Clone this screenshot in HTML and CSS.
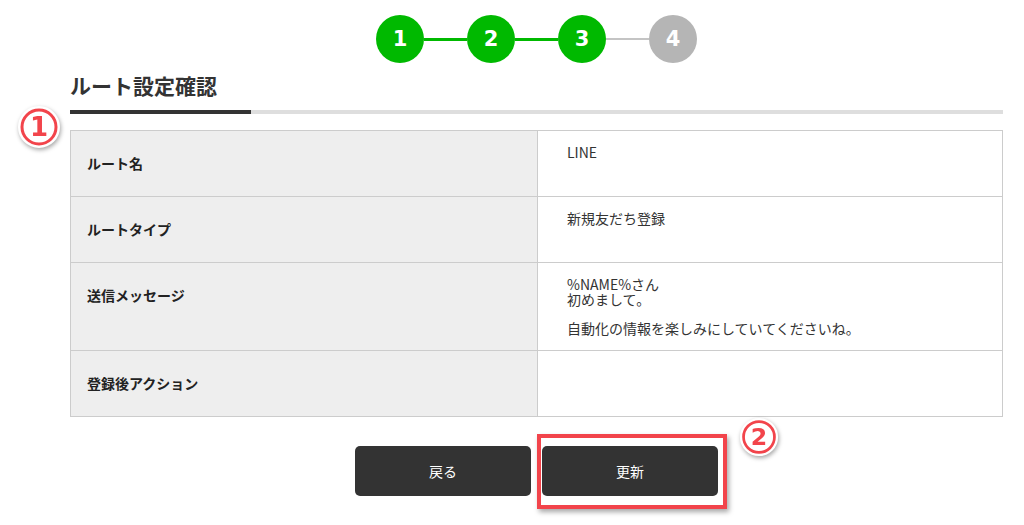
FILE: index.html
```html
<!DOCTYPE html>
<html lang="ja">
<head>
<meta charset="utf-8">
<title>ルート設定確認</title>
<link rel="stylesheet" href="styles.css">
</head>
<body>
<div class="page">
  <div class="stepper">
    <span class="step done">1</span>
    <span class="bar done"></span>
    <span class="step done">2</span>
    <span class="bar done"></span>
    <span class="step done">3</span>
    <span class="bar"></span>
    <span class="step">4</span>
  </div>

  <div class="section">
    <h1 class="title">ルート設定確認</h1>
    <div class="rule"><span class="rule-active"></span></div>
    <span class="mark mark-1">
      <svg viewBox="0 0 44 44" width="44" height="44"><circle cx="22" cy="22" r="18" fill="#fff" stroke="#fff" stroke-width="6"/><circle cx="22" cy="22" r="17" fill="none" stroke="#f2444b" stroke-width="3"/><text x="22" y="31" text-anchor="middle" class="mark-num">1</text></svg>
    </span>

    <table class="confirm">
      <tr>
        <th>ルート名</th>
        <td><p>LINE</p></td>
      </tr>
      <tr>
        <th>ルートタイプ</th>
        <td><p>新規友だち登録</p></td>
      </tr>
      <tr>
        <th>送信メッセージ</th>
        <td><p>%NAME%さん<br>初めまして。</p><p>自動化の情報を楽しみにしていてくださいね。</p></td>
      </tr>
      <tr>
        <th>登録後アクション</th>
        <td></td>
      </tr>
    </table>

    <div class="actions">
      <button class="btn">戻る</button>
      <div class="btn-wrap">
        <button class="btn">更新</button>
        <span class="highlight"></span>
        <span class="mark mark-2">
          <svg viewBox="0 0 44 44" width="40" height="40"><circle cx="22" cy="22" r="18" fill="#fff" stroke="#fff" stroke-width="6"/><circle cx="22" cy="22" r="17" fill="none" stroke="#f2444b" stroke-width="3"/><text x="22" y="31" text-anchor="middle" class="mark-num">2</text></svg>
        </span>
      </div>
    </div>
  </div>
</div>
</body>
</html>
```

FILE: styles.css
```css
* { box-sizing: border-box; }

html, body {
  margin: 0;
  background: #fff;
}

body {
  font-family: "Noto Sans CJK JP", "Noto Sans", sans-serif;
  color: #333;
  font-size: 14px;
  min-height: 525px;
}

.page {
  padding: 15px 21px 29px 70px;
}

.stepper {
  display: flex;
  justify-content: center;
  align-items: center;
  height: 48px;
}

.step {
  width: 48px;
  height: 48px;
  border-radius: 50%;
  background: #b5b5b5;
  color: #fff;
  font-family: "DejaVu Sans", Verdana, sans-serif;
  font-weight: bold;
  font-size: 21px;
  display: flex;
  align-items: center;
  justify-content: center;
  flex: none;
}

.step.done { background: #00b900; }

.bar {
  width: 43px;
  height: 2px;
  background: #c4c4c4;
  flex: none;
}

.bar.done {
  height: 3px;
  background: #00b900;
}

.section {
  position: relative;
}

.title {
  margin: 7px 0 0;
  font-size: 21px;
  line-height: 30px;
  font-weight: bold;
  color: #333;
}

.rule {
  margin-top: 10px;
  height: 4px;
  background: #dedede;
}

.rule-active {
  display: block;
  width: 181px;
  height: 4px;
  background: #333;
}

.confirm {
  margin-top: 16px;
  width: 100%;
  border-collapse: collapse;
  table-layout: fixed;
}

.confirm th,
.confirm td {
  border: 1px solid #cccccc;
  vertical-align: top;
  text-align: left;
}

.confirm th {
  width: 467px;
  background: #eeeeee;
  padding: 23px 16px 24px;
  font-size: 14px;
  line-height: 18px;
  font-weight: bold;
  color: #222;
}

.confirm td {
  padding: 14px 29px 14px;
  font-size: 14px;
  line-height: 15px;
  color: #333;
}

.confirm td p {
  margin: 0;
}

.confirm td p + p {
  margin-top: 14px;
}

.actions {
  display: flex;
  justify-content: center;
  align-items: flex-start;
  gap: 11px;
  margin-top: 29px;
}

.btn {
  display: block;
  width: 176px;
  height: 50px;
  border: none;
  border-radius: 5px;
  background: #333;
  color: #fff;
  font-family: "Noto Sans CJK JP", sans-serif;
  font-size: 14px;
  cursor: pointer;
}

.btn-wrap {
  position: relative;
}

.highlight {
  position: absolute;
  left: -5px;
  top: -12px;
  right: -9px;
  bottom: -13px;
  border: 4px solid #f2444b;
  box-shadow: 2px 3px 5px rgba(0, 0, 0, 0.35);
  pointer-events: none;
}

.mark {
  position: absolute;
  filter: drop-shadow(1px 2px 2px rgba(0, 0, 0, 0.35));
  line-height: 0;
}

.mark-1 {
  left: -53px;
  top: 35px;
}

.mark-2 {
  left: 197px;
  top: -29px;
}

.mark-num {
  fill: #f2444b;
  font-family: "DejaVu Sans", sans-serif;
  font-weight: bold;
  font-size: 26px;
}
```
